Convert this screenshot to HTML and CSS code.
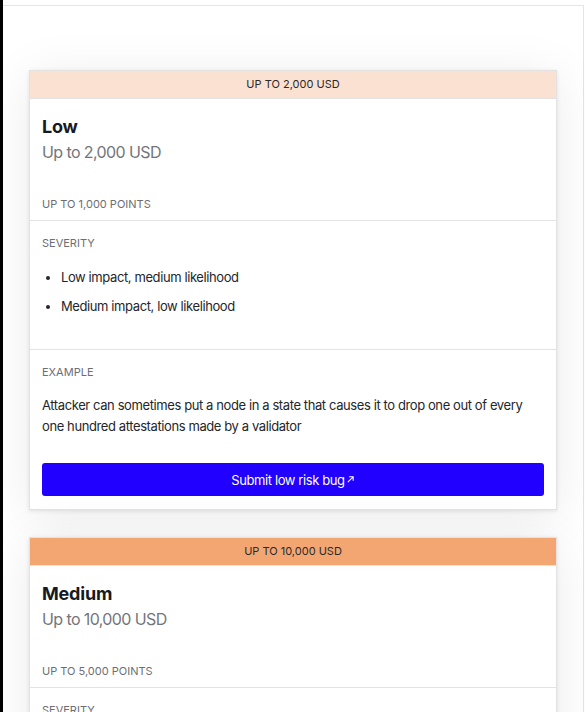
FILE: index.html
```html
<!DOCTYPE html>
<html>
<head>
<meta charset="utf-8">
<link rel="stylesheet" href="styles.css">
</head>
<body>
<div class="frame">
  <div class="page">
    <div class="card">
      <div class="band band-low">UP TO 2,000 USD</div>
      <div class="top">
        <div class="title">Low</div>
        <div class="amount">Up to 2,000 USD</div>
        <div class="points">UP TO 1,000 POINTS</div>
      </div>
      <div class="section">
        <div class="label">SEVERITY</div>
        <ul class="list">
          <li>Low impact, medium likelihood</li>
          <li>Medium impact, low likelihood</li>
        </ul>
      </div>
      <div class="section example">
        <div class="label">EXAMPLE</div>
        <p class="text">Attacker can sometimes put a node in a state that causes it to drop one out of every one hundred attestations made by a validator</p>
        <a class="btn" href="#">Submit low risk bug<svg class="arrow" viewBox="0 0 10 10" width="9" height="9"><path d="M2 8 L8 2 M3.5 2 H8 V6.5" fill="none" stroke="#fff" stroke-width="1.2"/></svg></a>
      </div>
    </div>
    <div class="card">
      <div class="band band-med">UP TO 10,000 USD</div>
      <div class="top">
        <div class="title">Medium</div>
        <div class="amount">Up to 10,000 USD</div>
        <div class="points">UP TO 5,000 POINTS</div>
      </div>
      <div class="section">
        <div class="label">SEVERITY</div>
        <ul class="list">
          <li>Medium impact, medium likelihood</li>
          <li>High impact, low likelihood</li>
        </ul>
      </div>
    </div>
  </div>
</div>
</body>
</html>
```
FILE: styles.css
```css
html, body {
  margin: 0;
  padding: 0;
  height: 100%;
  overflow: hidden;
}
body {
  background: linear-gradient(to right, #000 3px, #fff 3px);
  font-family: Inter, "Liberation Sans", sans-serif;
  color: #2b2b2b;
}
.frame {
  margin-left: 3px;
  margin-top: 5px;
  width: 581px;
  min-height: 100%;
  background: #fff;
  border-top: 1px solid #e4e4e4;
  border-right: 1px solid #e4e4e4;
  box-sizing: border-box;
}
.page {
  padding: 64px 26px 0 26px;
  display: flex;
  flex-direction: column;
  gap: 27px;
}
.card {
  background: #fff;
  border: 1px solid #e3e3e3;
  box-shadow: 0 1px 4px rgba(0,0,0,0.10), 0 6px 48px rgba(0,0,0,0.08);
}
.band {
  font-size: 11px;
  line-height: 16.5px;
  padding: 5px 0;
  text-align: center;
  color: #2a2a2a;
  border-bottom: 1px solid #e3e3e3;
}
.band-low { background: #fbe1d1; }
.band-med { background: #f4a672; }
.top {
  padding: 15px 12px 8px 12px;
  border-bottom: 1px solid #e3e3e3;
}
.title {
  font-size: 18px;
  line-height: 26px;
  font-weight: 700;
  color: #161a22;
  letter-spacing: -0.2px;
}
.amount {
  font-size: 16px;
  line-height: 24px;
  color: #74757a;
  letter-spacing: -0.6px;
}
.points {
  margin-top: 32px;
  font-size: 11px;
  line-height: 16.5px;
  color: #6d6e73;
}
.section {
  padding: 14px 12px 33px 12px;
  border-bottom: 1px solid #e3e3e3;
}
.label {
  font-size: 11px;
  line-height: 16.5px;
  color: #6d6e73;
  margin-bottom: 15px;
}
.list {
  margin: 0;
  padding-left: 19px;
  font-size: 13px;
  line-height: 20px;
  color: #24262b;
  letter-spacing: -0.4px;
  display: flex;
  flex-direction: column;
  gap: 9px;
}
.example {
  padding-bottom: 13px;
  border-bottom: none;
}
.example .label {
  margin-bottom: 15px;
}
.text {
  margin: 0;
  font-size: 13px;
  line-height: 20.5px;
  color: #24262b;
  letter-spacing: -0.4px;
}
.btn {
  margin-top: 27px;
  display: flex;
  align-items: center;
  justify-content: center;
  gap: 1px;
  height: 33px;
  background: #2100ff;
  border-radius: 3px;
  color: #fff;
  font-size: 13px;
  letter-spacing: -0.4px;
  text-decoration: none;
}
.arrow {
  display: block;
  margin-top: -1px;
}
```
